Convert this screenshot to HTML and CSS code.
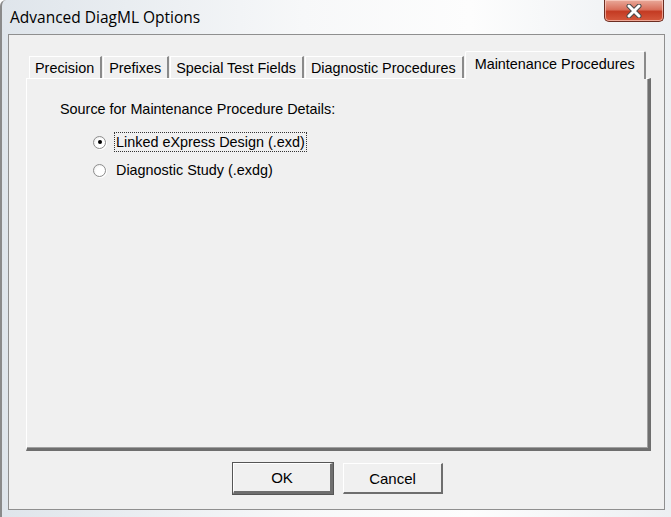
FILE: index.html
```html
<!DOCTYPE html>
<html lang="en">
<head>
  <meta charset="UTF-8" />
  <title>Advanced DiagML Options</title>
  <link rel="stylesheet" href="styles.css">
</head>
<body>
  <div class="ventana">
    <div class="barra-titulo">
      <span class="titulo">Advanced DiagML Options</span>
      <button class="cerrar" aria-label="Close">
        <svg width="20" height="14" viewBox="0 0 20 14">
          <path d="M5 2 L15 12 M15 2 L5 12" stroke="#4a4a4a" stroke-width="5" stroke-linecap="round" />
          <path d="M5 2 L15 12 M15 2 L5 12" stroke="#fff" stroke-width="3" stroke-linecap="round" />
        </svg>
      </button>
    </div>

    <div class="cliente">
      <div class="pestanas">
        <span class="pestana">Precision</span>
        <span class="pestana">Prefixes</span>
        <span class="pestana">Special Test Fields</span>
        <span class="pestana">Diagnostic Procedures</span>
        <span class="pestana activa">Maintenance Procedures</span>
      </div>

      <div class="panel">
        <p class="etiqueta">Source for Maintenance Procedure Details:</p>
        <label class="opcion">
          <span class="radio marcado"></span>
          <span class="texto foco">Linked eXpress Design (.exd)</span>
        </label>
        <label class="opcion">
          <span class="radio"></span>
          <span class="texto">Diagnostic Study (.exdg)</span>
        </label>
      </div>

      <div class="botones">
        <button class="boton defecto">OK</button>
        <button class="boton">Cancel</button>
      </div>
    </div>
  </div>
</body>
</html>
```

FILE: styles.css
```css
body {
  margin: 0;
  font-family: "Liberation Sans", Arial, sans-serif;
  background-color: #fff;
  color: #000;
}

.ventana {
  width: 671px;
  height: 517px;
  box-sizing: border-box;
  border-left: 2px solid #8a8a8a;
  border-top-left-radius: 6px;
  background: linear-gradient(to right, #dfe5eb, #f7f8f9 45%, #fdfdfd 70%, #eceff2);
  overflow: hidden;
}

.barra-titulo {
  height: 34px;
  display: flex;
  justify-content: space-between;
  align-items: flex-start;
}

.titulo {
  margin: 6px 0 0 8px;
  font-family: "Open Sans", "Liberation Sans", sans-serif;
  font-size: 15.5px;
  color: #000;
}

.cerrar {
  width: 60px;
  height: 22px;
  margin-right: 7px;
  padding: 0;
  border: 1px solid #6b2d22;
  border-top: none;
  border-radius: 0 0 5px 5px;
  background: linear-gradient(#e9a99a, #d9705c 45%, #c43b23 55%, #d5593d);
  box-shadow: inset 0 0 0 1px rgba(255, 220, 210, 0.6);
  display: flex;
  align-items: center;
  justify-content: center;
}

.cliente {
  margin-left: 6px;
  width: 657px;
  height: 476px;
  box-sizing: border-box;
  border: 1px solid #8f8f8f;
  background-color: #f0f0f0;
  padding: 16px 0 0 17px;
}

.pestanas {
  display: flex;
  align-items: flex-end;
  height: 27px;
  padding-left: 3px;
  position: relative;
  z-index: 1;
}

.pestana {
  height: 22px;
  box-sizing: border-box;
  padding: 3px 6px 0 5px;
  font-size: 14.4px;
  background-color: #f0f0f0;
  border-top: 1px solid #fff;
  border-left: 1px solid #fff;
  border-right: 2px solid #8a8a8a;
  margin-right: 1px;
  white-space: nowrap;
}

.pestana.activa {
  height: 28px;
  margin-bottom: -1px;
  margin-left: 0;
  padding: 4px 9px 0 9px;
  border-radius: 2px 2px 0 0;
}

.panel {
  width: 625px;
  height: 373px;
  box-sizing: border-box;
  background-color: #f0f0f0;
  border-top: 1px solid #fff;
  border-left: 1px solid #fff;
  border-right: 3px solid #6e6e6e;
  border-bottom: 3px solid #6e6e6e;
  box-shadow: inset -1px -1px 0 #a0a0a0;
  padding: 22px 0 0 33px;
}

.etiqueta {
  margin: 0 0 15px;
  font-size: 14.4px;
}

.opcion {
  display: flex;
  align-items: center;
  gap: 8px;
  margin: 0 0 8px 33px;
  font-size: 14.4px;
}

.radio {
  width: 11px;
  height: 11px;
  border-radius: 50%;
  border: 1px solid #8d8d8d;
  background: radial-gradient(circle at 60% 60%, #fff 45%, #e4e4e4);
  box-shadow: 1px 1px 0 #fff;
  display: flex;
  align-items: center;
  justify-content: center;
}

.radio.marcado::after {
  content: "";
  width: 4px;
  height: 4px;
  border-radius: 50%;
  background-color: #000;
}

.texto {
  padding: 1px 1px;
  border: 1px dotted transparent;
}

.texto.foco {
  border-color: #333;
}

.botones {
  display: flex;
  justify-content: center;
  gap: 10px;
  padding: 12px 14px 0 0;
}

.boton {
  width: 100px;
  height: 31px;
  box-sizing: border-box;
  font-family: "Liberation Sans", Arial, sans-serif;
  font-size: 15px;
  color: #000;
  background-color: #f0f0f0;
  border-top: 1px solid #fff;
  border-left: 1px solid #fff;
  border-right: 2px solid #6e6e6e;
  border-bottom: 2px solid #6e6e6e;
  padding: 0;
}

.boton.defecto {
  outline: 1px solid #555;
  outline-offset: 0;
  border-right-width: 3px;
  border-bottom-width: 3px;
}
```
